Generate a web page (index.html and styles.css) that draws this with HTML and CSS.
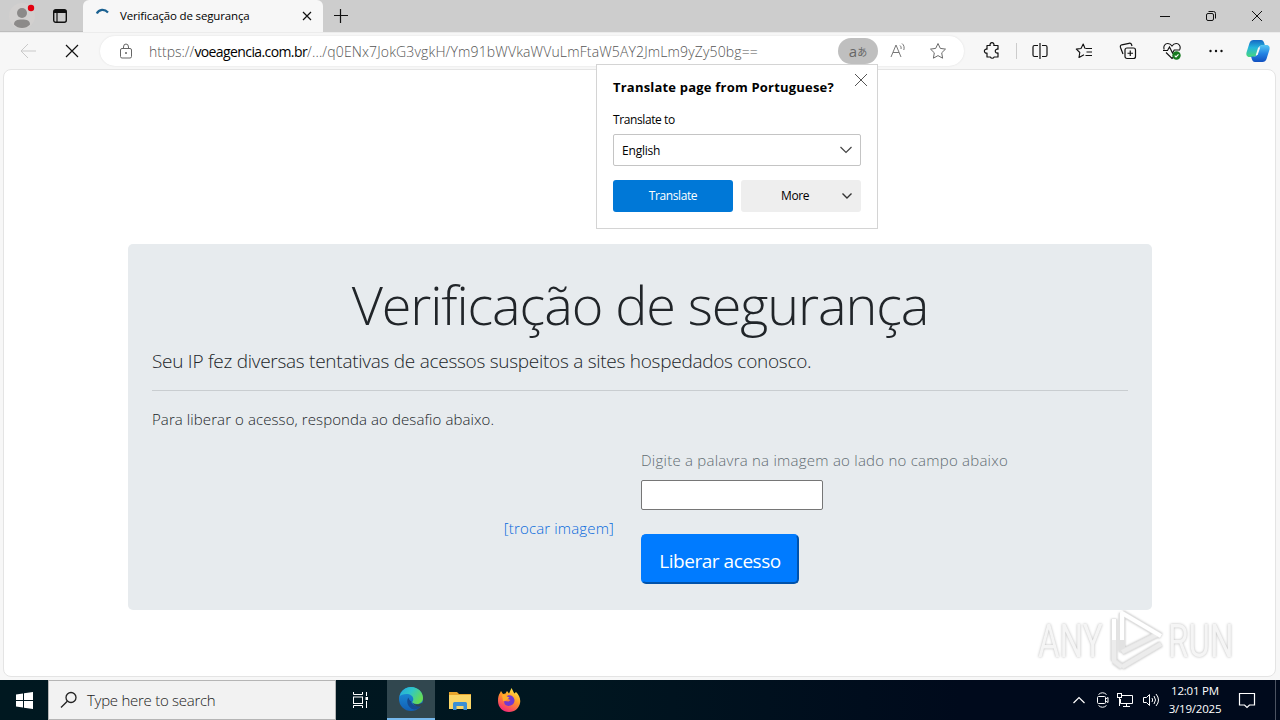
FILE: index.html
```html
<!DOCTYPE html>
<html lang="pt-br">
<head>
  <meta charset="UTF-8" />
  <meta name="viewport" content="width=device-width, initial-scale=1.0" />
  <title>Verificação de segurança</title>
  <link rel="stylesheet" href="styles.css">
</head>
<body>
  <!-- tabs -->
  <div class="tabstrip">
    <div class="tab-left">
      <svg class="profile" width="28" height="28" viewBox="0 0 28 28">
        <circle cx="14" cy="14" r="13" fill="#d2d0cf"/>
        <circle cx="14" cy="11" r="5" fill="#8c8a89"/>
        <path d="M6 22.500c0-4 3-5 8-5s8 1 8 5c-2 2.500-5 3.500-8 3.500s-6-1-8-3.500z" fill="#8c8a89"/>
        <circle cx="23" cy="6" r="3.200" fill="#e3000f"/>
      </svg>
      <svg width="16" height="16" viewBox="0 0 16 16" fill="none" stroke="#111">
        <rect x="1.700" y="1.700" width="12.600" height="12.600" rx="2" stroke-width="1.400"/>
        <path d="M2 3.500h12" stroke-width="3"/><path d="M5 4v10" stroke-width="1.200"/>
      </svg>
    </div>
    <div class="tab">
      <svg width="16" height="16" viewBox="0 0 16 16" fill="none" stroke="#1b6191" stroke-width="2.200"><path d="M1.800 5.500C4 1 9.500.5 13 4.500"/></svg>
      <span class="tab-title">Verificação de segurança</span>
      <svg width="10" height="10" viewBox="0 0 10 10" stroke="#111" stroke-width="1.200"><path d="M1 1l8 8M9 1L1 9"/></svg>
    </div>
    <svg class="new-tab" width="14" height="14" viewBox="0 0 14 14" stroke="#111" stroke-width="1.200"><path d="M0 6.500h14M6.500 0v14"/></svg>
    <div class="window-buttons">
      <svg width="12" height="12" viewBox="0 0 12 12" stroke="#111"><path d="M1 6.500h10"/></svg>
      <svg width="12" height="12" viewBox="0 0 12 12" fill="none" stroke="#111"><rect x="1.500" y="3.500" width="7" height="7" rx="1.500"/><path d="M3.500 1.500h5a2 2 0 0 1 2 2v5"/></svg>
      <svg width="12" height="12" viewBox="0 0 12 12" stroke="#111"><path d="M1 1l10 10M11 1L1 11"/></svg>
    </div>
  </div>

  <!-- address bar -->
  <div class="toolbar">
    <svg class="back" width="18" height="16" viewBox="0 0 18 16" fill="none" stroke="#c9c9c9"><path d="M17 8H2M9 1L2 8l7 7"/></svg>
    <svg class="stop" width="14" height="14" viewBox="0 0 14 14" stroke="#111" stroke-width="1.200"><path d="M1 1l12 12M13 1L1 13"/></svg>
    <div class="address">
      <svg class="lock" width="14" height="16" viewBox="0 0 14 16" fill="none" stroke="#666"><rect x="1.500" y="5.500" width="11" height="9.500" rx="1.500"/><path d="M4.500 5.500V4a2.500 3 0 0 1 5 0v1.500"/><circle cx="7" cy="10" r=".6" fill="#666"/></svg>
      <div class="url"><span class="url-scheme">https://</span><span class="url-host">voeagencia.com.br</span><span class="url-path">/.../q0ENx7JokG3vgkH/Ym91bWVkaWVuLmFtaW5AY2JmLm9yZy50bg==</span></div>
      <div class="translate-icon"><span>a</span><span class="kana">あ</span></div>
      <svg class="read" width="18" height="18" viewBox="0 0 18 18" fill="none" stroke="#777"><path d="M2 15L7 3l5 12M4 10.500h6M11 3.500c1 .8 1.300 2 1 3.500M13 1.500c2 1.500 2.600 4 1.800 6.500"/></svg>
      <svg width="18" height="18" viewBox="0 0 18 18" fill="none" stroke="#6b6b6b" stroke-linejoin="round"><path d="M9 1.500l2.300 4.900 5.200.7-3.800 3.700.9 5.400L9 13.600l-4.600 2.600.9-5.400L1.500 7.100l5.200-.7z"/></svg>
    </div>
    <div class="tools">
      <svg width="18" height="18" viewBox="0 0 18 18" fill="none" stroke="#111" stroke-width="1.200" stroke-linejoin="round"><path d="M4 3.500h3.200a2 2 0 1 1 3.600 0H15V7.200a2 2 0 1 0 0 3.700V15h-3.900a2 2 0 0 1-3.700 0H4v-4a2 2 0 1 1 0-3.800z"/></svg>
      <i class="divider"></i>
      <svg width="18" height="18" viewBox="0 0 18 18" fill="none" stroke="#111" stroke-width="1.200"><path d="M7 3.500H3.500a1.500 1.500 0 0 0-1.500 1.500v8a1.500 1.500 0 0 0 1.500 1.500H7M11 3.500h3.500A1.500 1.500 0 0 1 16 5v8a1.500 1.500 0 0 1-1.500 1.500H11M9 1v16"/></svg>
      <svg width="18" height="18" viewBox="0 0 18 18" fill="none" stroke="#111" stroke-width="1.100" stroke-linejoin="round"><path d="M10.500 6.500H17M11.500 10H17M10.500 13.500H17M10 6.500L8.200 2 6 6.500l-4.700.6L4.800 10.500 4 15.500l5-2.800"/></svg>
      <svg width="18" height="18" viewBox="0 0 18 18" fill="none" stroke="#111" stroke-width="1.200"><rect x="6" y="6" width="10.500" height="10.500" rx="2"/><path d="M11.250 8.500v5.500M8.500 11.250H14M4 12L1.500 5.500C1 4 1.500 3.200 2.800 2.800L10 1.300c1.500-.3 2.300.3 2.700 1.700l.3 1"/></svg>
      <svg width="18" height="18" viewBox="0 0 18 18" fill="none" stroke="#111" stroke-width="1.100"><path d="M1.200 7.500C0 4 2 1.500 4.800 1.500 6.800 1.500 8 2.500 9 4c1-1.500 2.200-2.500 4.200-2.500C16 1.500 18 4 16.800 7.500M3 10.500l6 6 1.500-1.500M0 8.500h4.500L6.500 5l3 6 1.700-3H17"/><circle cx="13.500" cy="13.500" r="4.200" fill="#187a20" stroke="none"/><path d="M11.700 13.700l1.300 1.200 2.500-2.600" stroke="#fff"/></svg>
      <svg width="18" height="18" viewBox="0 0 18 18" fill="#111"><circle cx="3.500" cy="9" r="1.200"/><circle cx="9" cy="9" r="1.200"/><circle cx="14.500" cy="9" r="1.200"/></svg>
    </div>
    <svg class="copilot" width="24" height="24" viewBox="0 0 24 24">
      <defs>
        <linearGradient id="cp1" x1="0" y1="0" x2="0" y2="1"><stop offset="0" stop-color="#1568c4"/><stop offset=".45" stop-color="#25b5dc"/><stop offset="1" stop-color="#48d77c"/></linearGradient>
        <linearGradient id="cp2" x1="0" y1="0" x2="0" y2="1"><stop offset="0" stop-color="#55c8f4"/><stop offset=".5" stop-color="#2384e4"/><stop offset="1" stop-color="#114fc0"/></linearGradient>
      </defs>
      <path d="M7.500 1H15c2 0 2.700 1.500 3.200 3l.7 2.500h-3c-2 0-3 1-3.500 3l-1.600 5.500C10.200 17 9 18 7 18H3.500C.5 18 0 15.500.5 13.500L3.500 4C4.200 2 5.500 1 7.500 1z" fill="url(#cp1)"/>
      <path d="M16.500 23H9c-2 0-2.700-1.500-3.200-3L5.100 17.500h3c2 0 3-1 3.500-3L13.200 9c.6-2 1.800-3 3.800-3h3.500c3 0 3.500 2.500 3 4.500l-3 9.500c-.7 2-2 3-4 3z" fill="url(#cp2)"/>
      <path d="M12.200 8.500h2l-2.600 7.500H9.800z" fill="#f7f7f7"/>
    </svg>
  </div>

  <div class="page">
    <div class="jumbotron">
      <h1>Verificação de segurança</h1>
      <p class="lead">Seu IP fez diversas tentativas de acessos suspeitos a sites hospedados conosco.</p>
      <hr>
      <p class="info">Para liberar o acesso, responda ao desafio abaixo.</p>
      <div class="row">
        <div class="captcha"><a href="#">[trocar imagem]</a></div>
        <form class="answer">
          <label for="code">Digite a palavra na imagem ao lado no campo abaixo</label>
          <input type="text" id="code" />
          <button type="button"><span>Liberar acesso</span></button>
        </form>
      </div>
    </div>
  </div>

  <!-- translate popup -->
  <div class="popup">
    <svg class="popup-close" width="14" height="14" viewBox="0 0 14 14" stroke="#555"><path d="M1 1l12 12M13 1L1 13"/></svg>
    <div class="popup-title">Translate page from Portuguese?</div>
    <div class="popup-label">Translate to</div>
    <div class="popup-select"><span>English</span><svg width="12" height="8" viewBox="0 0 12 8" fill="none" stroke="#444" stroke-width="1.200"><path d="M.5 1L6 6.500 11.500 1"/></svg></div>
    <div class="popup-buttons">
      <div class="btn-translate">Translate</div>
      <div class="btn-more"><span>More</span><svg width="10" height="8" viewBox="0 0 10 8" fill="none" stroke="#333" stroke-width="1.400"><path d="M.5 1.500L5 6l4.500-4.500"/></svg></div>
    </div>
  </div>

  <!-- watermark -->
  <div class="watermark">
    <span>ANY</span>
    <svg width="58" height="62" viewBox="0 0 58 62" fill="none" stroke-linejoin="round">
      <path class="mark-shadow" d="M16 3v39M16 3l39 23M8 9v42M16 42l36-18M16 57l39-23M8 51l8 6" stroke="#e2e2e2" stroke-width="6"/>
      <path d="M16 42l36-18M16 57l39-23M8 30v21l8 6" stroke="#ececec" stroke-width="4"/>
      <path d="M8 30V9M16 30V3l39 23" stroke="#fff" stroke-width="4"/>
    </svg>
    <span>RUN</span>
  </div>

  <div class="taskbar">
    <div class="start"><svg width="17" height="17" viewBox="0 0 17 17" fill="#fff"><path d="M0 2.500l7-1V8H0zM8 1.300L17 0v8H8zM0 9h7v6.500l-7-1zM8 9h9v8l-9-1.300z"/></svg></div>
    <div class="search">
      <svg width="18" height="18" viewBox="0 0 18 18" fill="none" stroke="#222" stroke-width="1.300"><circle cx="11" cy="6.500" r="5"/><path d="M7.300 10.200L1 16.500"/></svg>
      <span>Type here to search</span>
    </div>
    <div class="task task-view"><svg width="18" height="16" viewBox="0 0 18 16" fill="none" stroke="#fff"><rect x="2.500" y="5" width="9" height="6.500"/><path d="M2.500 0v2.500h9V0M2.500 16v-2.500h9V16M15.500 0v4M15.500 9v7"/><path d="M14.500 6.500h2.500" stroke-width="3"/></svg></div>
    <div class="task active">
      <svg width="24" height="24" viewBox="0 0 24 24">
        <defs>
          <linearGradient id="e1" x1="0" y1="0" x2="1" y2=".5"><stop offset="0" stop-color="#23a7e0"/><stop offset=".5" stop-color="#2fc6c8"/><stop offset="1" stop-color="#65db55"/></linearGradient>
          <linearGradient id="e2" x1="0" y1="0" x2="0" y2="1"><stop offset="0" stop-color="#1d95dd"/><stop offset="1" stop-color="#125fb5"/></linearGradient>
        </defs>
        <circle cx="12" cy="12" r="12" fill="url(#e2)"/>
        <path d="M.5 9.500C2 4 6.500 0 12 0c7 0 12 5 12 11 0 3.500-2.500 6-6 6-3 0-4.700-1-4.700-2 0-.8 1-1 1-3C14.300 9 11 7 7.500 7 4 7 1.500 8 .5 9.500z" fill="url(#e1)"/>
        <path d="M9.500 10.500C7 13 8 21 15 22.500c3 .3 6-2 7.500-4.500-3 1.500-7 1-9.200-1-1.700-1.500-.8-2.500-.8-2.500s-2.500-1-3-4z" fill="#164b91"/>
        <path d="M13.300 15.500c1.500 2 6 2.500 9.500.5L24 17v2l-2 .5c-4 .5-7-1-8.700-4z" fill="#31474f"/>
      </svg>
    </div>
    <div class="task">
      <svg width="22" height="19" viewBox="0 0 22 19"><path d="M0 1h8l2 2h12v15H0z" fill="#e8a52c"/><path d="M0 4h22v14H0z" fill="#fbd667"/><path d="M4 19v-6.500A1.500 1.500 0 0 1 5.500 11h11a1.500 1.500 0 0 1 1.500 1.500V19h-3.500v-4h-7v4z" fill="#3c8fd3"/></svg>
    </div>
    <div class="task">
      <svg width="24" height="24" viewBox="0 0 24 24">
        <defs><linearGradient id="ff" x1=".8" y1="0" x2=".3" y2="1"><stop offset="0" stop-color="#fff04a"/><stop offset=".45" stop-color="#ff9a26"/><stop offset="1" stop-color="#f5267a"/></linearGradient></defs>
        <path d="M3 5l1-2 2 3 2.500-.5L10 3l2 2.500L14.500 0l2.800 5.500L19 4c3 3 4.500 6 4.200 10C22.500 20 18 24 12 24S1 19.500 1 13c0-3.500.5-6 2-8z" fill="url(#ff)"/>
        <path d="M9 9c2-3 8-2 8.500 3 .2 4-3 6-6 6-3.500 0-5-3-4-5l4 .5 2-1.500-2.500-1z" fill="#7138d0"/>
        <path d="M5 7c2-1 4 0 5 1.500l2.500 1-3.500 3-3 .5z" fill="#ffae2b"/>
      </svg>
    </div>
    <div class="tray">
      <svg width="12" height="8" viewBox="0 0 12 8" fill="none" stroke="#fff" stroke-width="1.200"><path d="M.5 7L6 1.500 11.500 7"/></svg>
      <svg class="camera" width="14" height="18" viewBox="0 0 14 18" fill="none" stroke="#fff"><rect x="1.500" y="5.500" width="8" height="7" rx="1"/><path d="M9.500 8l2.500-1.500v5L9.500 10M2.500 3.500q4-3.500 8 0M2.500 14.500q4 3.500 8 0"/></svg>
      <svg width="18" height="16" viewBox="0 0 18 16" fill="none" stroke="#fff"><path d="M6 3.500h10.500v8H4.500V7M10.500 11.500v3M7 14.500h7"/><rect x="1.500" y="1.500" width="4" height="4"/><path d="M3.500 5.500V14"/></svg>
      <svg width="18" height="16" viewBox="0 0 18 16" fill="none" stroke="#fff"><path d="M1.500 5.500h3l3-3v11l-3-3h-3zM10 6q1.300 2 0 4M12 4q3 4 0 8M14 2q5 6 0 12"/></svg>
    </div>
    <div class="clock"><div>12:01 PM</div><div>3/19/2025</div></div>
    <svg class="notify" width="18" height="17" viewBox="0 0 18 17" fill="none" stroke="#fff" stroke-width="1.200"><path d="M1.500 1.500h15v11.500h-5L9 15.500 6.500 13h-5z"/></svg>
    <i class="show-desktop"></i>
  </div>
</body>
</html>
```
FILE: styles.css
```css
* {
  box-sizing: border-box;
}
body {
  margin: 0;
  width: 1280px;
  height: 720px;
  overflow: hidden;
  position: relative;
  display: flex;
  flex-direction: column;
  font-family: "Open Sans", "Noto Sans", sans-serif;
  font-size: 12px;
  color: #000;
  background: #f7f7f7;
}
svg {
  display: block;
  flex: none;
}
span, a {
  white-space: nowrap;
}

/* tabs */
.tabstrip {
  height: 32px;
  background: #cdcdcd;
  display: flex;
  align-items: center;
}
.tab-left {
  width: 83px;
  height: 32px;
  padding-left: 8px;
  display: flex;
  align-items: center;
  gap: 16px;
  border-bottom: 1px solid #bdbdbd;
}
.tab {
  width: 240px;
  height: 32px;
  padding: 0 11px 0 12px;
  display: flex;
  align-items: center;
  background: #f7f7f7;
  border-radius: 6px 6px 0 0;
}
.tab-title {
  flex: 1;
  margin-left: 9px;
  margin-top: -1px;
  font-size: 11.500px;
  letter-spacing: -0.150px;
}
.new-tab {
  margin-left: 11px;
}
.window-buttons {
  margin-left: auto;
  margin-right: 17px;
  display: flex;
  gap: 34px;
}

/* address bar */
.toolbar {
  height: 37px;
  display: flex;
  align-items: center;
  padding-left: 19px;
  border-top: 1px solid #ececec;
}
.stop {
  margin-left: 28px;
}
.address {
  width: 864px;
  height: 30px;
  margin-left: 21px;
  padding: 0 17px 0 19px;
  display: flex;
  align-items: center;
  background: #fff;
  border-radius: 15px;
  box-shadow: 0 0 2px #ddd;
}
.url {
  flex: 1;
  margin-left: 16px;
  font-size: 14px;
  font-weight: 300;
  color: #555;
  white-space: nowrap;
}
.url-host {
  font-weight: 400;
  color: #000;
  letter-spacing: -0.600px;
}
.url-path {
  letter-spacing: 0.140px;
}
.translate-icon {
  width: 40px;
  height: 26px;
  border-radius: 13px;
  background: #bfbfbf;
  color: #666;
  display: flex;
  align-items: center;
  justify-content: center;
  font-size: 15px;
}
.kana {
  font-family: "Noto Sans CJK JP", sans-serif;
  font-size: 10px;
}
.read {
  margin: 0 22px 0 11px;
}
.tools {
  margin-left: 19px;
  display: flex;
  align-items: center;
  gap: 26px;
}
.divider {
  width: 1px;
  height: 16px;
  margin: 0 -12px 0 -11px;
  background: #ccc;
}
.copilot {
  margin-left: 21px;
}

/* page */
.page {
  width: 1273px;
  height: 608px;
  margin-left: 3px;
  padding-top: 174px;
  background: #fff;
  border: 1px solid #e4e4e4;
  border-radius: 8px;
}
.jumbotron {
  width: 1024px;
  height: 366px;
  margin-left: 124px;
  padding: 22px 24px;
  background: #e7ebee;
  border-radius: 5px;
  color: #212529;
}
h1 {
  margin: 0;
  height: 76px;
  line-height: 76px;
  font-size: 54px;
  font-weight: 300;
  letter-spacing: -1.100px;
  text-align: center;
  white-space: nowrap;
}
.lead {
  margin: 4px 0 0;
  height: 30px;
  line-height: 30px;
  font-size: 19px;
  font-weight: 300;
  letter-spacing: -0.270px;
  white-space: nowrap;
}
hr {
  margin: 14px 0 16px;
  border: 0;
  border-top: 1px solid #c9cdd0;
}
.info {
  margin: 0;
  height: 24px;
  line-height: 24px;
  font-size: 15px;
  font-weight: 350;
  letter-spacing: 0.090px;
}
.row {
  display: flex;
  gap: 27px;
  margin-top: 17px;
}
.captcha {
  width: 462px;
  padding-top: 68px;
  text-align: right;
}
.captcha a {
  font-size: 15px;
  line-height: 24px;
  font-weight: 300;
  letter-spacing: 0.150px;
  color: #0769dc;
  text-decoration: none;
}
.answer {
  display: flex;
  flex-direction: column;
  align-items: flex-start;
}
.answer label {
  height: 24px;
  line-height: 24px;
  font-size: 15px;
  font-weight: 300;
  letter-spacing: 0.240px;
  color: #626b72;
}
.answer input {
  width: 182px;
  height: 30px;
  margin: 8px 0 24px;
  border: 1px solid #767676;
  border-radius: 2px;
  background: #fff;
}
.answer button {
  width: 158px;
  height: 50px;
  padding: 3px 0 0;
  border: 2px outset #007bff;
  border-radius: 5px;
  background: #007bff;
  color: #fff;
  font-family: inherit;
  font-size: 19px;
  letter-spacing: -0.450px;
}

/* translate popup */
.popup {
  position: absolute;
  left: 596px;
  top: 64px;
  width: 282px;
  height: 165px;
  padding: 13px 16px;
  background: #fff;
  border: 1px solid #d4d4d4;
  letter-spacing: -0.400px;
}
.popup-close {
  position: absolute;
  right: 9px;
  top: 8px;
}
.popup-title {
  height: 18px;
  line-height: 18px;
  font-size: 13px;
  font-weight: 700;
  letter-spacing: 0.200px;
  white-space: nowrap;
}
.popup-label {
  margin-top: 15px;
  height: 18px;
  line-height: 18px;
}
.popup-select {
  height: 32px;
  margin-top: 5px;
  padding: 0 8px;
  display: flex;
  align-items: center;
  justify-content: space-between;
  border: 1px solid #c4c4c4;
  border-radius: 2px;
  letter-spacing: -0.200px;
}
.popup-buttons {
  display: flex;
  gap: 8px;
  margin-top: 14px;
}
.btn-translate, .btn-more {
  width: 120px;
  height: 32px;
  line-height: 32px;
  border-radius: 3px;
  text-align: center;
}
.btn-translate {
  background: #0078d7;
  color: #fff;
}
.btn-more {
  display: flex;
  align-items: center;
  justify-content: space-between;
  padding: 0 9px 0 40px;
  background: #eee;
}

/* watermark */
.watermark {
  position: absolute;
  left: 1038px;
  top: 610px;
  width: 194px;
  display: flex;
  align-items: center;
  justify-content: space-between;
  font-family: Roboto, sans-serif;
  font-size: 46px;
  color: #f5f5f5;
  text-shadow: 0 0 3px #b5b5b5;
}
.watermark span {
  width: 64px;
  transform: scaleX(.72);
  transform-origin: left;
}
.mark-shadow {
  filter: drop-shadow(0 0 1px #bbb);
}

/* taskbar */
.taskbar {
  position: absolute;
  left: 0;
  bottom: 0;
  width: 1280px;
  height: 40px;
  display: flex;
  align-items: center;
  background: linear-gradient(90deg, #001820 0%, #001620 45%, #000a1c 75%, #000a1c 100%);
}
.start, .task {
  width: 48px;
  height: 40px;
  display: flex;
  align-items: center;
  justify-content: center;
}
.task {
  margin-right: 1px;
}
.task-view {
  margin-right: 3px;
}
.search {
  width: 288px;
  height: 40px;
  padding-left: 11px;
  display: flex;
  align-items: center;
  gap: 9px;
  background: #f2f2f2;
  border: 1px solid #b5b5b5;
  font-size: 15px;
  font-weight: 350;
  letter-spacing: -0.270px;
  color: #222;
}
.active {
  background: #31474f;
  border-bottom: 2px solid #76b9ed;
}
.tray {
  margin-left: auto;
  display: flex;
  align-items: center;
  gap: 8px;
}
.camera {
  margin: 0 -2px 0 3px;
}
.clock {
  width: 54px;
  margin-left: 8px;
  font-size: 11.500px;
  letter-spacing: -0.200px;
  line-height: 18px;
  text-align: center;
  color: #fff;
  white-space: nowrap;
}
.notify {
  margin: 0 19px 0 16px;
}
.show-desktop {
  width: 5px;
  height: 40px;
  border-left: 1px solid #4b5361;
}
```
